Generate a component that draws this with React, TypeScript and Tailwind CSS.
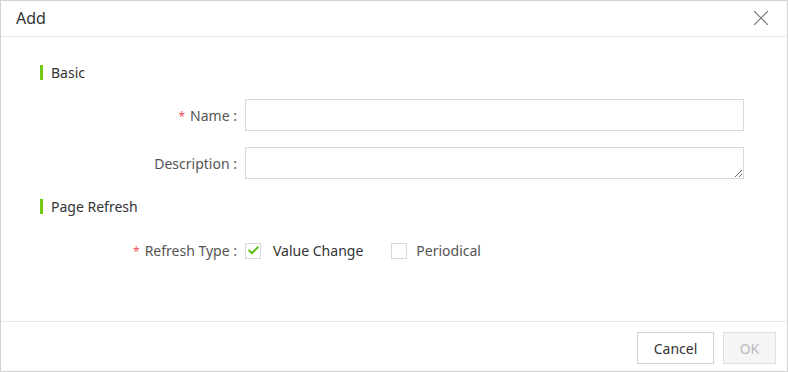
import { X, Check } from 'lucide-react';

const SectionTitle = ({ children }: { children: string }) => (
  <div className="flex h-[15px] items-center gap-2 pl-[39px]">
    <span className="h-[15px] w-[3px] bg-[#72c80f]" />
    <span className="text-[14px] leading-none text-[#333]">{children}</span>
  </div>
);

const Label = ({ text, required }: { text: string; required?: boolean }) => (
  <label className="w-[244px] shrink-0 pr-2 text-right text-[14px] text-[#555]">
    {required && <span className="mr-[5px] text-[12px] text-[#f0505a]">*</span>}
    {text} :
  </label>
);

const CheckItem = ({ label, checked }: { label: string; checked?: boolean }) => (
  <div className="flex items-center">
    <span className="flex h-4 w-4 items-center justify-center border border-[#d9d9d9] bg-white">
      {checked && <Check size={13} strokeWidth={3.5} className="text-[#5fbf14]" />}
    </span>
    <span className={checked ? 'ml-3 text-[14px] text-[#333]' : 'ml-[9px] text-[14px] text-[#555]'}>
      {label}
    </span>
  </div>
);

const App = () => {
  return (
    <div
      className="flex h-[372px] w-[788px] flex-col border border-[#d3d3d3] bg-white"
      style={{ fontFamily: '"Noto Sans", "Open Sans", sans-serif' }}>
      <div className="flex h-[36px] shrink-0 items-center justify-between border-b border-[#e8e8e8] pb-[2px] pl-[15px] pr-[13px]">
        <span className="text-[16px] text-[#333]">Add</span>
        <X size={26} strokeWidth={1} className="text-[#777]" />
      </div>
      <div className="flex-1 pt-[28px]">
        <SectionTitle>Basic</SectionTitle>
        <div className="mt-[19px] flex flex-col gap-4 pr-[43px]">
          <div className="flex items-center">
            <Label text="Name" required />
            <input className="h-8 flex-1 border border-[#d9d9d9] px-2 text-[14px] outline-none" />
          </div>
          <div className="flex items-center">
            <Label text="Description" />
            <textarea className="h-8 flex-1 resize-y border border-[#d9d9d9] px-2 text-[14px] outline-none" />
          </div>
        </div>
        <div className="mt-[20px]">
          <SectionTitle>Page Refresh</SectionTitle>
        </div>
        <div className="mt-[26px] flex items-center">
          <Label text="Refresh Type" required />
          <div className="flex items-center gap-[28px]">
            <CheckItem label="Value Change" checked />
            <CheckItem label="Periodical" />
          </div>
        </div>
      </div>
      <div className="flex h-[50px] shrink-0 items-start justify-end gap-[9px] border-t border-[#e8e8e8] pr-[11px] pt-[10px]">
        <button className="h-8 w-[77px] border border-[#d3d3d3] bg-white text-[14px] text-[#333]">
          Cancel
        </button>
        <button
          disabled
          className="h-8 w-[53px] border border-[#e0e0e0] bg-[#f5f5f5] text-[14px] text-[#bbb]">
          OK
        </button>
      </div>
    </div>
  );
};

export default App;
